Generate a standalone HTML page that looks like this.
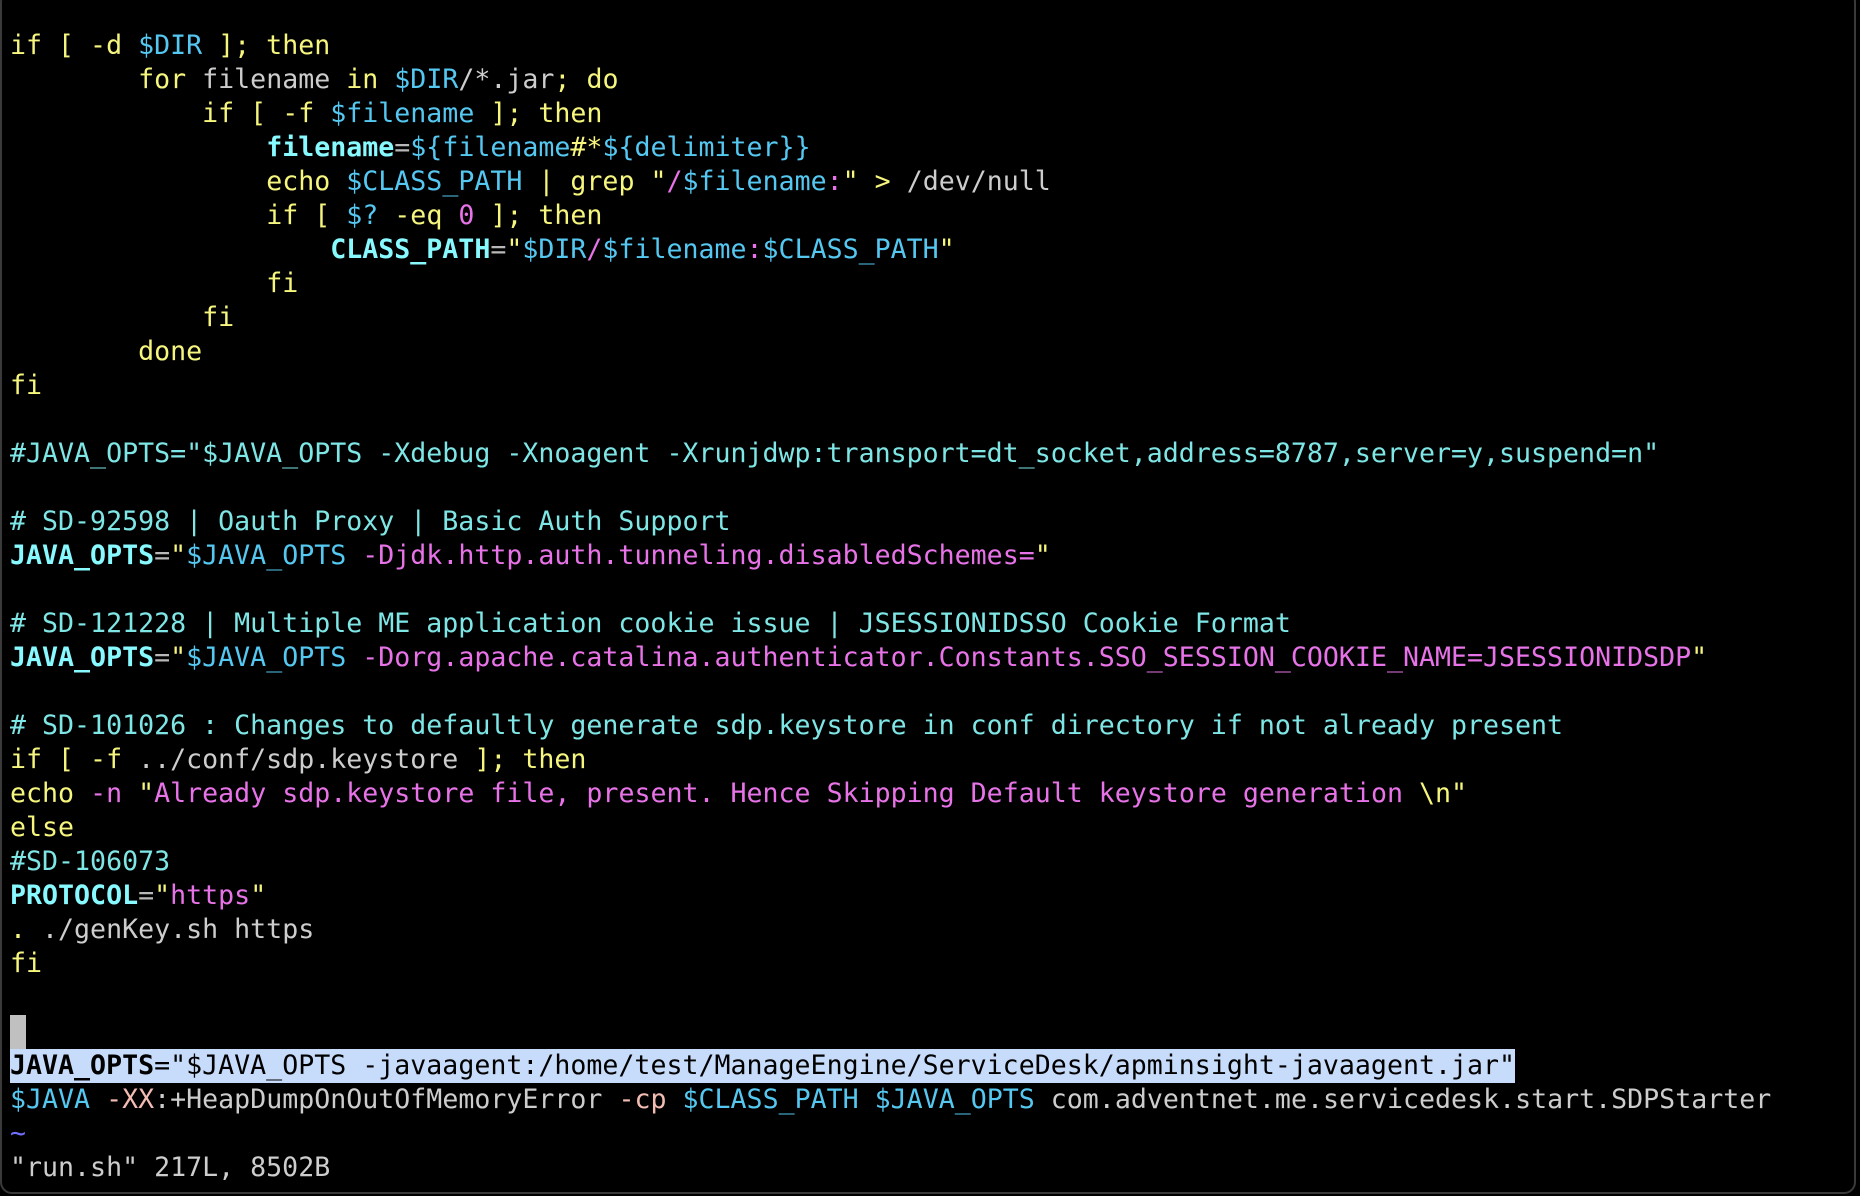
<!DOCTYPE html>
<html><head><meta charset="utf-8"><style>
html,body{margin:0;padding:0;background:#000;}
body{width:1860px;height:1196px;overflow:hidden;position:relative;}
.frame{position:absolute;left:0;top:-10px;width:1856px;height:1204px;border:2px solid #3a3a3a;border-radius:12px;box-sizing:border-box;}
pre{position:absolute;left:10px;top:29px;margin:0;font-family:"DejaVu Sans Mono","Liberation Mono",monospace;font-size:26.6px;line-height:34px;color:#cdcdcd;white-space:pre;}
.y{color:#f6f67e}.c{color:#55c8f2}.m{color:#e873e8}.k{color:#7fe6e6}.b{color:#87f9ff;font-weight:bold}.g{color:#b8b8b8}.o{color:#f3bcb2}.t{color:#6f6fff}
.hl{background:#c7dcfa;color:#000;display:inline-block;}
.hl .b2{font-weight:bold}
.cur{display:inline-block;width:16px;height:34px;background:#c0c0c0;vertical-align:top}
</style></head><body><div class="frame"></div>
<pre><span class="y">if [ -d </span><span class="c">$DIR</span><span class="y"> ]; then</span>
        <span class="y">for</span> filename <span class="y">in</span> <span class="c">$DIR</span>/*.jar<span class="y">; do</span>
            <span class="y">if [ -f </span><span class="c">$filename</span><span class="y"> ]; then</span>
                <span class="b">filename</span><span class="g">=</span><span class="c">${filename</span><span class="y">#*</span><span class="c">${delimiter}}</span>
                <span class="y">echo</span> <span class="c">$CLASS_PATH</span> <span class="y">| grep</span> <span class="y">"</span><span class="m">/</span><span class="c">$filename</span><span class="m">:</span><span class="y">"</span> <span class="y">&gt;</span> /dev/null
                <span class="y">if [ </span><span class="c">$?</span><span class="y"> -eq </span><span class="m">0</span><span class="y"> ]; then</span>
                    <span class="b">CLASS_PATH</span><span class="g">=</span><span class="y">"</span><span class="c">$DIR</span><span class="m">/</span><span class="c">$filename</span><span class="m">:</span><span class="c">$CLASS_PATH</span><span class="y">"</span>
                <span class="y">fi</span>
            <span class="y">fi</span>
        <span class="y">done</span>
<span class="y">fi</span>

<span class="k">#JAVA_OPTS="$JAVA_OPTS -Xdebug -Xnoagent -Xrunjdwp:transport=dt_socket,address=8787,server=y,suspend=n"</span>

<span class="k"># SD-92598 | Oauth Proxy | Basic Auth Support</span>
<span class="b">JAVA_OPTS</span><span class="g">=</span><span class="y">"</span><span class="c">$JAVA_OPTS</span><span class="m"> -Djdk.http.auth.tunneling.disabledSchemes=</span><span class="y">"</span>

<span class="k"># SD-121228 | Multiple ME application cookie issue | JSESSIONIDSSO Cookie Format</span>
<span class="b">JAVA_OPTS</span><span class="g">=</span><span class="y">"</span><span class="c">$JAVA_OPTS</span><span class="m"> -Dorg.apache.catalina.authenticator.Constants.SSO_SESSION_COOKIE_NAME=JSESSIONIDSDP</span><span class="y">"</span>

<span class="k"># SD-101026 : Changes to defaultly generate sdp.keystore in conf directory if not already present</span>
<span class="y">if [ -f </span>../conf/sdp.keystore<span class="y"> ]; then</span>
<span class="y">echo</span> <span class="m">-n</span> <span class="y">"</span><span class="m">Already sdp.keystore file, present. Hence Skipping Default keystore generation </span><span class="y">\n"</span>
<span class="y">else</span>
<span class="k">#SD-106073</span>
<span class="b">PROTOCOL</span><span class="g">=</span><span class="y">"</span><span class="m">https</span><span class="y">"</span>
<span class="y">.</span> ./genKey.sh https
<span class="y">fi</span>

<span class="cur"></span>
<span class="hl"><span class="b2">JAVA_OPTS</span>="$JAVA_OPTS -javaagent:/home/test/ManageEngine/ServiceDesk/apminsight-javaagent.jar"</span>
<span class="c">$JAVA</span> <span class="o">-XX</span>:+HeapDumpOnOutOfMemoryError <span class="o">-cp</span> <span class="c">$CLASS_PATH</span> <span class="c">$JAVA_OPTS</span> com.adventnet.me.servicedesk.start.SDPStarter
<span class="t">~</span>
"run.sh" 217L, 8502B</pre>
</body></html>
